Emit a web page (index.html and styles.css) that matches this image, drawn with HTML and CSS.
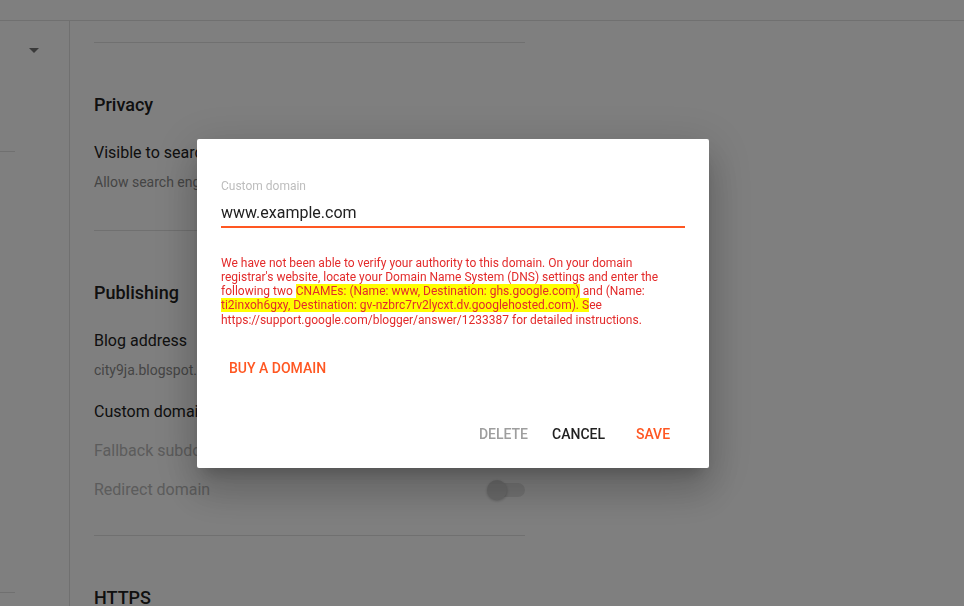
FILE: index.html
```html
<!DOCTYPE html>
<html lang="en">
<head>
    <meta charset="UTF-8">
    <meta name="viewport" content="width=device-width, initial-scale=1.0">
    <title>Settings - Custom domain</title>
    <link rel="stylesheet" href="styles.css">
</head>
<body>
    <div class="topbar"></div>
    <div class="main">
        <div class="sidebar">
            <div class="caret"></div>
            <div class="side-rule first"></div>
            <div class="side-rule second"></div>
        </div>
        <div class="content">
            <div class="rule top"></div>

            <h2 class="section-title privacy">Privacy</h2>
            <div class="setting-title">Visible to search engines</div>
            <div class="setting-sub">Allow search engines to find your blog</div>
            <div class="rule mid"></div>

            <h2 class="section-title publishing">Publishing</h2>
            <div class="setting-title">Blog address</div>
            <div class="setting-sub">city9ja.blogspot.com</div>
            <div class="setting-title after-sub">Custom domain</div>
            <div class="setting-title disabled gap">Fallback subdomain</div>
            <div class="setting-row gap">
                <span class="setting-title disabled">Redirect domain</span>
                <span class="switch"><span class="thumb"></span></span>
            </div>
            <div class="rule bottom"></div>

            <h2 class="section-title https">HTTPS</h2>
        </div>
    </div>

    <div class="overlay">
        <div class="dialog">
            <div class="field">
                <label class="field-label" for="domainInput">Custom domain</label>
                <div class="field-value" id="domainInput">www.example.com</div>
            </div>
            <div class="field-line"></div>
            <p class="error">We have not been able to verify your authority to this domain. On your domain registrar's website, locate your Domain Name System (DNS) settings and enter the following two <mark>CNAMEs: (Name: www, Destination: ghs.google.com)</mark> and (Name: <mark>ti2inxoh6gxy, Destination: gv-nzbrc7rv2lycxt.dv.googlehosted.com). S</mark>ee https://support.google.com/blogger/answer/1233387 for detailed instructions.</p>
            <button class="btn accent buy">BUY A DOMAIN</button>
            <div class="actions">
                <button class="btn muted" disabled>DELETE</button>
                <button class="btn">CANCEL</button>
                <button class="btn accent">SAVE</button>
            </div>
        </div>
    </div>
</body>
</html>
```

FILE: styles.css
```css
body {
    margin: 0;
    font-family: Roboto, "Liberation Sans", Arial, sans-serif;
    background: #fff;
    color: #212121;
    height: 606px;
    overflow: hidden;
}
.topbar {
    height: 20px;
    border-bottom: 1px solid #e0e0e0;
}
.main {
    display: flex;
    height: 585px;
}
.sidebar {
    width: 69px;
    border-right: 1px solid #e0e0e0;
    flex-shrink: 0;
}
.caret {
    width: 0;
    height: 0;
    margin: 27px 0 0 29px;
    border-left: 5px solid transparent;
    border-right: 5px solid transparent;
    border-top: 5px solid #757575;
}
.side-rule {
    width: 15px;
    height: 1px;
    background: #e0e0e0;
}
.side-rule.first {
    margin-top: 98px;
}
.side-rule.second {
    margin-top: 440px;
}
.content {
    width: 431px;
    margin-left: 24px;
}
.rule {
    height: 1px;
    background: #e0e0e0;
}
.rule.top {
    margin-top: 21px;
}
.rule.mid {
    margin-top: 38px;
}
.rule.bottom {
    margin-top: 35px;
}
.section-title {
    font-size: 18px;
    font-weight: 500;
    line-height: 24px;
    margin: 50px 0 26px;
    color: #212121;
}
.section-title.https {
    margin-top: 50px;
}
.setting-title {
    font-size: 16px;
    line-height: 20px;
    color: #212121;
}
.setting-title.disabled {
    color: #b8b8b8;
}
.setting-title.after-sub {
    margin-top: 22px;
}
.setting-title.gap,
.setting-row.gap {
    margin-top: 19px;
}
.setting-sub {
    font-size: 14px;
    line-height: 20px;
    margin-top: 9px;
    color: #8a8a8a;
}
.setting-row {
    display: flex;
    justify-content: space-between;
    align-items: center;
}
.switch {
    position: relative;
    width: 32px;
    height: 14px;
    border-radius: 7px;
    background: #e6e6e6;
}
.thumb {
    position: absolute;
    left: -6px;
    top: -3px;
    width: 20px;
    height: 20px;
    border-radius: 50%;
    background: #d4d4d4;
    box-shadow: 0 1px 3px rgba(0, 0, 0, 0.25);
}

/* modal */
.overlay {
    position: fixed;
    inset: 0;
    background: rgba(0, 0, 0, 0.5);
    display: flex;
    align-items: center;
    justify-content: center;
    padding-right: 58px;
}
.dialog {
    width: 464px;
    height: 290px;
    padding: 39px 24px 0;
    background: #fff;
    border-radius: 2px;
    box-shadow: 0 11px 15px -7px rgba(0, 0, 0, 0.2), 0 24px 38px 3px rgba(0, 0, 0, 0.14), 0 9px 46px 8px rgba(0, 0, 0, 0.12);
    display: flex;
    flex-direction: column;
}
.field {
    padding-bottom: 3px;
}
.field-line {
    height: 2px;
    background: #ff5722;
}
.field-label {
    display: block;
    font-size: 12px;
    line-height: 16px;
    color: #bdbdbd;
}
.field-value {
    margin-top: 9px;
    font-size: 16px;
    line-height: 20px;
    color: #212121;
}
.error {
    margin: 28px 0 0;
    font-size: 12px;
    line-height: 14.3px;
    color: #e32b2b;
}
.error mark {
    background: #ffff00;
    color: #e32b2b;
}
.btn {
    font-family: inherit;
    font-size: 14px;
    font-weight: 500;
    height: 36px;
    min-width: 64px;
    padding: 0 8px;
    border: none;
    background: none;
    color: #212121;
    cursor: pointer;
}
.btn.accent {
    color: #ff5722;
}
.btn.muted {
    color: #9e9e9e;
    cursor: default;
}
.buy {
    align-self: flex-start;
    margin-top: 23px;
}
.actions {
    display: flex;
    justify-content: flex-end;
    gap: 8px;
    margin-top: 30px;
}
```
